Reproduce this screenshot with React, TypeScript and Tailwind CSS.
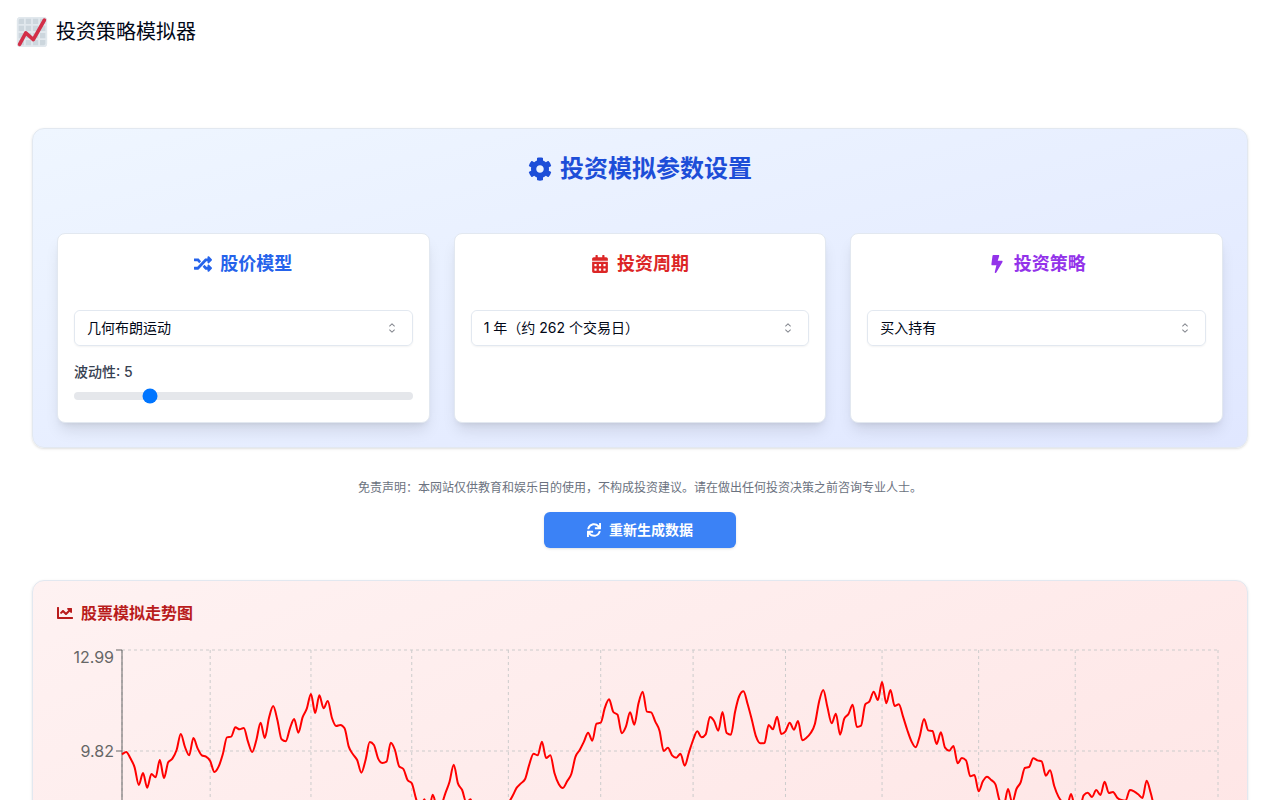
import { useId, useState } from "react";
import type { ReactNode } from "react";
import { FaBolt, FaCalendarAlt, FaChartLine, FaCog, FaRandom, FaSync } from "react-icons/fa";
import { RxCaretSort } from "react-icons/rx";

// Plot geometry, in svg user units
const WIDTH = 1166;
const HEIGHT = 400;
const LEFT = 65;
const RIGHT = 1161;
const TOP = 5;
const BOTTOM = 390;
const STEP = (RIGHT - LEFT) / 261;

const yTicks = [
  { label: "12.99", y: 5, textY: 18 },
  { label: "9.82", y: 106, textY: 112 },
];

const xTicks = [0, 21, 45, 69, 92, 114, 136, 158, 181, 204, 227, 261];

// One value per trading day: distance below the plot's ceiling, in thirds of a unit
const series = [
  343, 336, 355, 382, 435, 399, 443, 402, 412, 360, 414, 367, 356, 330, 282, 321, 346, 294, 325, 346,
  350, 363, 396, 380, 343, 292, 290, 262, 268, 264, 305, 336, 300, 248, 294, 234, 198, 240, 298, 304,
  265, 237, 278, 232, 206, 162, 219, 166, 205, 183, 234, 258, 255, 265, 320, 343, 360, 398, 360, 306,
  315, 356, 369, 365, 308, 330, 379, 387, 420, 430, 475, 510, 478, 515, 464, 500, 495, 460, 425, 374,
  430, 450, 487, 478, 520, 548, 560, 541, 552, 530, 518, 507, 490, 468, 443, 430, 417, 373, 341, 346,
  305, 354, 346, 400, 432, 444, 424, 402, 350, 330, 305, 278, 302, 251, 248, 203, 178, 216, 224, 280,
  260, 217, 254, 190, 155, 215, 217, 245, 272, 333, 323, 346, 353, 341, 377, 338, 300, 274, 292, 283,
  231, 243, 272, 216, 279, 284, 215, 168, 154, 193, 240, 290, 310, 309, 255, 268, 230, 282, 274, 248,
  269, 243, 301, 293, 279, 252, 185, 150, 202, 250, 221, 284, 236, 222, 194, 261, 257, 193, 184, 155,
  180, 126, 190, 150, 198, 193, 230, 270, 304, 322, 287, 237, 271, 273, 312, 277, 323, 332, 318, 370,
  354, 361, 409, 405, 454, 424, 410, 420, 433, 482, 495, 447, 488, 447, 427, 384, 381, 355, 361, 364,
  407, 391, 438, 470, 488, 500, 462, 505, 510, 466, 458, 471, 450, 465, 425, 459, 456, 473, 480, 482,
  450, 454, 463, 474, 422, 460, 510, 535, 528, 560, 590, 571, 604, 622, 598, 640, 655, 631, 662, 690,
  671, 684,
];

// Monotone cubic interpolation, so the line never overshoots a day's value
function linePath(values: number[]) {
  const ys = values.map((v) => v / 3 - 5);
  const slopes = ys.slice(1).map((y, i) => (y - ys[i]) / STEP);
  const tangents = ys.map((_, i) => {
    const a = slopes[i - 1] ?? slopes[i];
    const b = slopes[i] ?? slopes[i - 1];
    if (a * b <= 0) return 0;
    return Math.sign(a) * Math.min(Math.abs(a), Math.abs(b), Math.abs(a + b) / 4) * 2;
  });
  let d = `M${LEFT},${ys[0]}`;
  for (let i = 1; i < ys.length; i++) {
    const x0 = LEFT + (i - 1) * STEP;
    const x1 = LEFT + i * STEP;
    const h = STEP / 3;
    d += `C${x0 + h},${ys[i - 1] + h * tangents[i - 1]},${x1 - h},${ys[i] - h * tangents[i]},${x1},${ys[i]}`;
  }
  return d;
}

function Logo() {
  return (
    <svg viewBox="0 0 36 36" className="w-8 h-8" aria-hidden="true">
      <rect x="1" y="1" width="34" height="34" rx="4" fill="#E1E8ED" />
      <rect x="2" y="2" width="32" height="32" rx="3" fill="#CCD6DD" />
      <path
        d="M2 10h32M2 18h32M2 26h32M10 2v32M18 2v32M26 2v32"
        stroke="#E1E8ED"
        strokeWidth="2"
      />
      <rect x="2" y="2" width="32" height="32" rx="3" fill="none" stroke="#E1E8ED" strokeWidth="2" />
      <path
        d="M4 32 11 19 19.5 26.5 32 4.5"
        fill="none"
        stroke="#D32F48"
        strokeWidth="4"
        strokeLinecap="round"
        strokeLinejoin="round"
      />
    </svg>
  );
}

interface PanelProps {
  title: string;
  icon: ReactNode;
  color: string;
  options: string[];
  children?: ReactNode;
}

function Panel({ title, icon, color, options, children }: PanelProps) {
  const id = useId();
  return (
    <div className="rounded-lg border border-[#e2e8f0] bg-white p-4 shadow-lg">
      <h3 className={`mb-8 flex items-center justify-center gap-2 text-lg leading-7 font-semibold ${color}`}>
        {icon}
        <label htmlFor={id}>{title}</label>
      </h3>
      <div className="relative flex h-9 items-center rounded-md border border-[#e2e8f0] shadow-xs">
        <select id={id} className="h-full w-full appearance-none rounded-md bg-white px-3 text-sm">
          {options.map((option) => (
            <option key={option}>{option}</option>
          ))}
        </select>
        <RxCaretSort className="pointer-events-none absolute right-3 h-4 w-4 opacity-50" />
      </div>
      {children}
    </div>
  );
}

function PriceChart() {
  return (
    <svg viewBox={`0 0 ${WIDTH} ${HEIGHT}`} className="block w-full" role="img" aria-label="股票模拟走势图">
      <g stroke="#ccc" strokeDasharray="3 3">
        {yTicks.map((t) => (
          <line key={t.label} x1={LEFT} x2={RIGHT} y1={t.y} y2={t.y} />
        ))}
        {xTicks.map((i) => (
          <line key={i} x1={LEFT + i * STEP} x2={LEFT + i * STEP} y1={TOP} y2={BOTTOM} />
        ))}
      </g>
      <line x1={LEFT} x2={LEFT} y1={TOP} y2={BOTTOM} stroke="#666" />
      {yTicks.map((t) => (
        <g key={t.label}>
          <line x1={LEFT - 6} x2={LEFT} y1={t.y} y2={t.y} stroke="#666" />
          <text x={LEFT - 8} y={t.textY} textAnchor="end" fill="#666" fontSize="16">
            {t.label}
          </text>
        </g>
      ))}
      <path d={linePath(series)} fill="none" stroke="#ff0000" strokeWidth="2" />
    </svg>
  );
}

export default function App() {
  const [volatility, setVolatility] = useState(5);

  return (
    <div className="min-h-screen bg-white font-[Inter,'Noto_Sans_CJK_SC',sans-serif] text-[#020817]">
      <header className="flex h-16 items-center gap-2 px-4">
        <Logo />
        <h1 className="text-xl">投资策略模拟器</h1>
      </header>

      <main className="px-8 pt-16 pb-8">
        <section className="rounded-xl border border-[#e2e8f0] bg-linear-to-br from-[#eff6ff] to-[#e0e7ff] p-6 shadow-sm">
          <h2 className="mb-12 flex items-center justify-center gap-2 text-2xl leading-8 font-bold text-[#1d4ed8]">
            <FaCog />
            投资模拟参数设置
          </h2>
          <div className="grid grid-cols-1 gap-6 md:grid-cols-3">
            <Panel
              title="股价模型"
              icon={<FaRandom />}
              color="text-[#2563eb]"
              options={["几何布朗运动", "均值回归", "随机游走"]}
            >
              <label htmlFor="volatility" className="mt-4 block text-sm leading-5 font-medium text-[#374151]">
                波动性: {volatility}
              </label>
              <input
                id="volatility"
                type="range"
                min={1}
                max={20}
                value={volatility}
                onChange={(e) => setVolatility(Number(e.target.value))}
                className="mt-2.5 mb-1.5 block h-2 w-full cursor-pointer appearance-none rounded-lg bg-[#e5e7eb]"
              />
            </Panel>
            <Panel
              title="投资周期"
              icon={<FaCalendarAlt />}
              color="text-[#dc2626]"
              options={["1 年（约 262 个交易日）", "3 年（约 786 个交易日）", "5 年（约 1310 个交易日）"]}
            />
            <Panel
              title="投资策略"
              icon={<FaBolt />}
              color="text-[#9333ea]"
              options={["买入持有", "定期定额", "网格交易"]}
            />
          </div>
        </section>

        <p className="mt-8 text-center text-xs leading-4 text-[#6b7280]">
          免责声明：本网站仅供教育和娱乐目的使用，不构成投资建议。请在做出任何投资决策之前咨询专业人士。
        </p>
        <button className="mx-auto mt-4 flex h-9 w-48 items-center justify-center gap-2 rounded-md bg-[#3b82f6] text-sm font-bold text-white shadow-sm hover:bg-[#2563eb]">
          <FaSync />
          重新生成数据
        </button>

        <section className="mt-8 rounded-xl border border-[#e2e8f0] bg-linear-to-br from-[#fef2f2] to-[#fee2e2] p-6 shadow-sm">
          <h2 className="mb-6 flex items-center gap-2 text-base leading-4 font-semibold text-[#b91c1c]">
            <FaChartLine />
            股票模拟走势图
          </h2>
          <PriceChart />
        </section>
      </main>
    </div>
  );
}
